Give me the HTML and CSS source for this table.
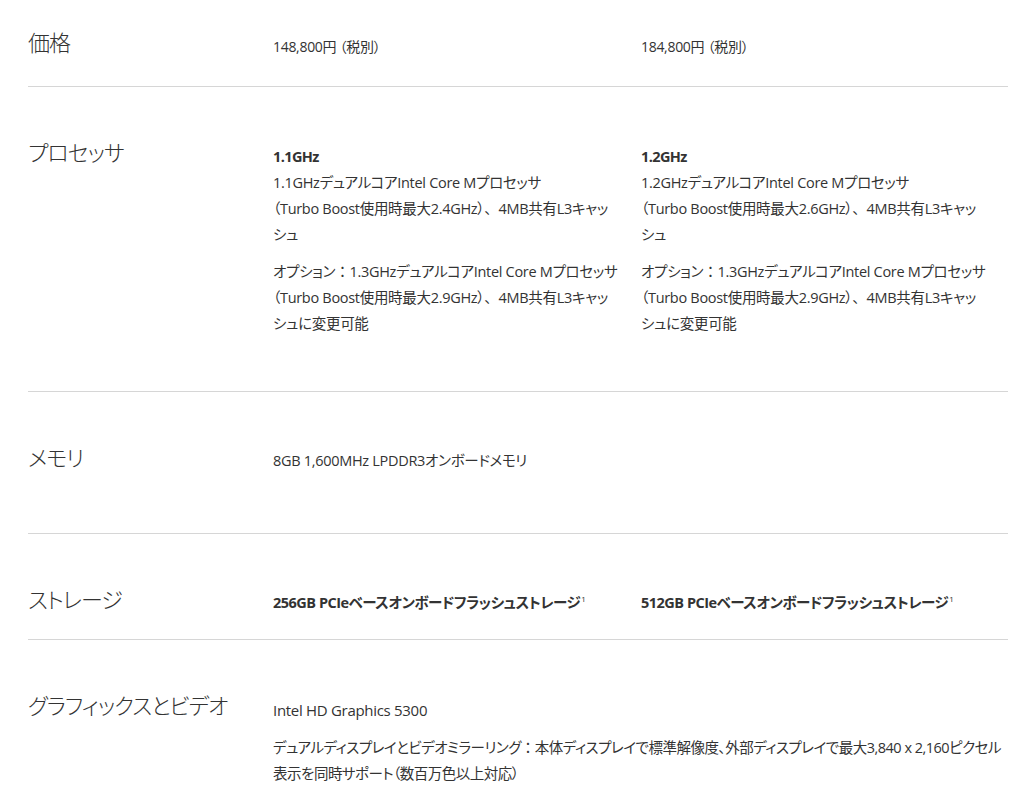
FILE: index.html
```html
<!DOCTYPE html>
<html lang="ja">
<head>
<meta charset="utf-8">
<title>仕様</title>
<link rel="stylesheet" href="styles.css">
</head>
<body>
<main class="specs">
  <section class="row row-price">
    <h2 class="label">価格</h2>
    <div class="cols">
      <div class="col"><p class="line">148,800円 （税別）</p></div>
      <div class="col"><p class="line">184,800円 （税別）</p></div>
    </div>
  </section>

  <section class="row row-cpu">
    <h2 class="label">プロセッサ</h2>
    <div class="cols">
      <div class="col">
        <p class="title">1.1GHz</p>
        <p class="para">1.1GHzデュアルコアIntel Core Mプロセッサ<br>（Turbo Boost使用時最大2.4GHz）<span class="fw">、</span>4MB共有L3キャッシュ</p>
        <p class="para">オプション<span class="fw">：</span>1.3GHzデュアルコアIntel Core Mプロセッサ<br>（Turbo Boost使用時最大2.9GHz）<span class="fw">、</span>4MB共有L3キャッシュに変更可能</p>
      </div>
      <div class="col">
        <p class="title">1.2GHz</p>
        <p class="para">1.2GHzデュアルコアIntel Core Mプロセッサ<br>（Turbo Boost使用時最大2.6GHz）<span class="fw">、</span>4MB共有L3キャッシュ</p>
        <p class="para">オプション<span class="fw">：</span>1.3GHzデュアルコアIntel Core Mプロセッサ<br>（Turbo Boost使用時最大2.9GHz）<span class="fw">、</span>4MB共有L3キャッシュに変更可能</p>
      </div>
    </div>
  </section>

  <section class="row row-mem">
    <h2 class="label">メモリ</h2>
    <div class="cols">
      <div class="col wide"><p class="line">8GB 1,600MHz LPDDR3オンボードメモリ</p></div>
    </div>
  </section>

  <section class="row row-storage">
    <h2 class="label">ストレージ</h2>
    <div class="cols">
      <div class="col"><p class="line strong">256GB PCIeベースオンボードフラッシュストレージ<sup>1</sup></p></div>
      <div class="col"><p class="line strong">512GB PCIeベースオンボードフラッシュストレージ<sup>1</sup></p></div>
    </div>
  </section>

  <section class="row row-gfx last">
    <h2 class="label">グラフィックスとビデオ</h2>
    <div class="cols">
      <div class="col wide">
        <p class="line gfx-name">Intel HD Graphics 5300</p>
        <p class="para">デュアルディスプレイとビデオミラーリング<span class="fw">：</span>本体ディスプレイで標準解像度、外部ディスプレイで最大3,840 x 2,160ピクセル表示を同時サポート（数百万色以上対応）</p>
      </div>
    </div>
  </section>
</main>
</body>
</html>
```

FILE: styles.css
```css
* { box-sizing: border-box; }
html, body { margin: 0; padding: 0; background: #fff; }
body {
  font-family: "Open Sans", "Noto Sans CJK JP", sans-serif;
  color: #333;
  font-size: 14.5px;
  font-feature-settings: "palt";
  -webkit-font-smoothing: antialiased;
}
.specs {
  width: 980px;
  margin-left: 28px;
}
.row {
  display: flex;
  border-bottom: 1px solid #d6d6d6;
  padding-top: 50px;
}
.row-price { padding-top: 27px; padding-bottom: 26px; }
.row-cpu { padding-bottom: 43px; }
.row-mem { padding-bottom: 59px; }
.row-storage { padding-bottom: 23px; }
.row.last { border-bottom: none; }
.label {
  margin: 0;
  width: 245px;
  flex: none;
  font-family: "Noto Sans CJK JP", sans-serif;
  font-size: 22px;
  font-weight: 300;
  line-height: 28px;
  letter-spacing: -1px;
  color: #333;
}
.cols {
  display: flex;
  flex: 1;
}
.col {
  width: 368px;
  flex: none;
  padding-right: 20px;
}
.col.wide { width: auto; flex: 1; padding-right: 0; }
.line, .para, .title {
  margin: 0;
  line-height: 26px;
  letter-spacing: -0.3px;
}
.para { line-break: strict; margin-bottom: 11px; }
.fw { font-feature-settings: normal; }
.line { padding-top: 6px; }
.row-price .line { padding-top: 7px; font-size: 14px; }
.strong { font-weight: 700; letter-spacing: -0.5px; }
.strong sup { font-size: 8px; font-weight: 400; vertical-align: top; position: relative; top: -4px; margin-left: 1px; }
.title { font-weight: 700; padding-top: 7px; letter-spacing: -0.6px; }
.gfx-name { font-size: 15px; padding-top: 7px; margin-bottom: 12px; }
.row-gfx .para { margin-bottom: 0; letter-spacing: -0.5px; }
```
